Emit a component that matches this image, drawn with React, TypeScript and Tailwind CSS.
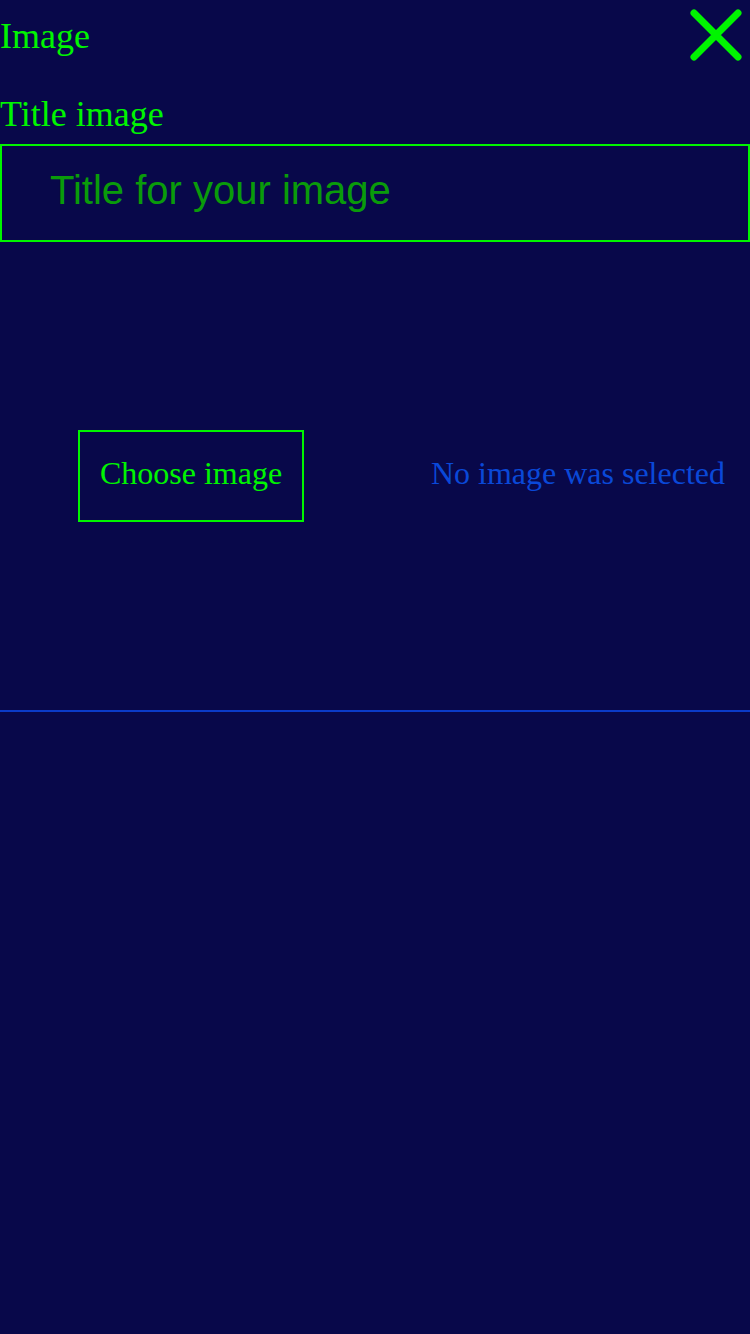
export default function App() {
  return (
    <div className="min-h-[1334px] w-[750px] bg-[#08084a] flex flex-col">
      <header className="h-[94px] flex justify-between items-start">
        <h1 className="mt-[16px] text-[36px] leading-[40px] text-[#00f500] font-['Liberation_Serif',serif]">
          Image
        </h1>
        <button className="mt-[8px] mr-[7px]" aria-label="Close">
          <svg width="54" height="54" viewBox="0 0 54 54" fill="none">
            <path d="M5 5L49 49M49 5L5 49" stroke="#00f500" strokeWidth="7" strokeLinecap="round" />
          </svg>
        </button>
      </header>

      <label className="text-[36px] leading-[40px] text-[#00f500] font-['Liberation_Serif',serif]">
        Title image
      </label>

      <input
        type="text"
        placeholder="Title for your image"
        className="mt-[10px] h-[98px] w-full border-2 border-[#00f500] bg-transparent pl-[48px] pb-[6px] text-[40px] text-[#0a9b0a] placeholder:text-[#0a9b0a] font-['Liberation_Sans',sans-serif] outline-none"
      />

      <div className="h-[468px] flex items-center">
        <button className="ml-[78px] w-[226px] h-[92px] pb-[6px] border-2 border-[#00f500] text-[32px] text-[#00f500] font-['Liberation_Serif',serif]">
          Choose image
        </button>
        <span className="ml-auto mr-[25px] mb-[6px] text-[32px] text-[#0a48d8] font-['Liberation_Serif',serif]">
          No image was selected
        </span>
      </div>

      <div className="h-[2px] bg-[#0b3bc8]" />
    </div>
  );
}
